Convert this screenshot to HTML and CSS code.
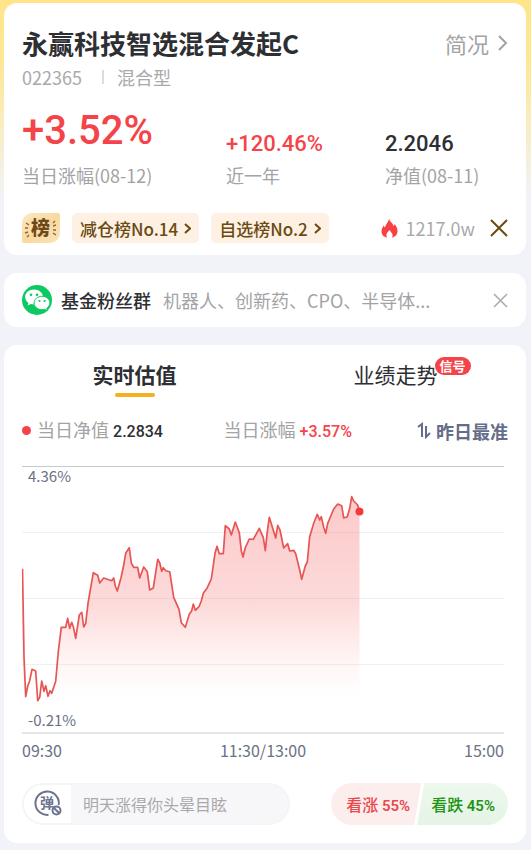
FILE: index.html
```html
<!DOCTYPE html>
<html lang="zh-CN">
  <head>
    <meta charset="UTF-8" />
    <meta name="viewport" content="width=device-width, initial-scale=1.0" />
    <title>永赢科技智选混合发起C</title>
    <link rel="stylesheet" href="styles.css">
  </head>
  <body>
    <main class="page">
      <!-- fund summary -->
      <section class="card summary">
        <div class="title-row">
          <h1>永赢科技智选混合发起C</h1>
          <a href="#" class="more">简况
            <svg width="10" height="16" viewBox="0 0 10 16"><path d="M1 1l7 7-7 7" /></svg>
          </a>
        </div>
        <div class="meta">
          <span>022365</span>
          <span class="split"></span>
          <span>混合型</span>
        </div>
        <div class="stats">
          <div class="stat">
            <p class="num big red">+3.52%</p>
            <p class="label">当日涨幅(08-12)</p>
          </div>
          <div class="stat">
            <p class="num red">+120.46%</p>
            <p class="label">近一年</p>
          </div>
          <div class="stat">
            <p class="num">2.2046</p>
            <p class="label">净值(08-11)</p>
          </div>
        </div>
        <div class="tags">
          <svg class="rank-icon" width="38" height="30" viewBox="0 0 38 30">
            <defs>
              <linearGradient id="gold" x1="0" y1="0" x2="1" y2="1">
                <stop offset="0" stop-color="#fde9c4" />
                <stop offset="0.5" stop-color="#f9d9a0" />
                <stop offset="1" stop-color="#fce3b6" />
              </linearGradient>
            </defs>
            <path d="M10 0h26a2 2 0 0 1 2 2v18a10 10 0 0 1-10 10H2a2 2 0 0 1-2-2V10A10 10 0 0 1 10 0z" fill="url(#gold)" />
            <path d="M4 10l3 2M3 15h3M3 20l3-1M5 24l2-2M31 10l2-2M31 13l3-1M31 17h3M31 20l3 2" stroke="#8a6a3a" stroke-width="1.5" fill="none" />
            <text x="9" y="22" class="rank-text">榜</text>
          </svg>
          <a href="#" class="tag">减仓榜No.14
            <svg width="7" height="11" viewBox="0 0 7 11"><path d="M1 1l5 4.500-5 4.500" /></svg>
          </a>
          <a href="#" class="tag">自选榜No.2
            <svg width="7" height="11" viewBox="0 0 7 11"><path d="M1 1l5 4.500-5 4.500" /></svg>
          </a>
          <span class="hot">
            <svg width="17" height="19" viewBox="0 0 17 19">
              <path d="M8 0c1 3 4 4 4.500 7 .6-.4 1-1 1-2 1.800 2 3 4 3 7 0 3.600-2.400 6-5.500 6.700 1-1.700.8-3.700-.5-4.900-.8-.8-1.300-1.600-1.500-2.800-1.800 1-3.600 3-3.600 5 0 1 .2 1.900.7 2.700C2.600 18 .5 15.500.5 12.300c0-2.600 1.300-4.300 2.200-5.900.4.900.6 1.500 1.300 2C4.500 5 7.500 3.500 8 0z" fill="#fa4141" />
            </svg>
            1217.0w
          </span>
          <button class="close brown" aria-label="关闭榜单">
            <svg width="18" height="18" viewBox="0 0 18 18"><path d="M1 1l16 16M17 1L1 17" /></svg>
          </button>
        </div>
      </section>

      <!-- wechat group -->
      <section class="card group">
        <svg class="wechat" width="30" height="30" viewBox="0 0 30 30">
          <circle cx="15" cy="15" r="15" fill="#0bca62" />
          <path d="M12 4.500C7 4.500 3.100 7.700 3.100 11.900c0 2.400 1.300 4.500 3.300 5.900l-.8 2.700 3.100-1.500c1.100.3 2.200.5 3.400.5 5 0 8.900-3.300 8.900-7.500s-4-7.500-9-7.500z" fill="#fff" />
          <path d="M20 11.300c-4.400 0-7.900 2.900-7.900 6.700s3.500 6.700 7.900 6.700c1 0 1.900-.1 2.700-.4l2.800 1.400-.7-2.500c1.900-1.200 3.100-3.100 3.100-5.200 0-3.800-3.500-6.700-7.900-6.700z" fill="#fff" stroke="#0bca62" />
          <g fill="#0bca62">
            <circle cx="9" cy="9.700" r="1.300" /><circle cx="15" cy="9.700" r="1.300" />
            <circle cx="17.500" cy="16" r="1.100" /><circle cx="22.600" cy="16" r="1.100" />
          </g>
        </svg>
        <strong>基金粉丝群</strong>
        <span class="topics">机器人、创新药、CPO、半导体...</span>
        <button class="close" aria-label="关闭粉丝群">
          <svg width="15" height="15" viewBox="0 0 15 15"><path d="M1 1l13 13M14 1L1 14" /></svg>
        </button>
      </section>

      <!-- live estimate -->
      <section class="card estimate">
        <div class="tabs">
          <button class="tab active">实时估值</button>
          <button class="tab">业绩走势<span class="badge">信号</span></button>
        </div>
        <div class="legend">
          <p class="value"><span class="dot"></span>当日净值 <b>2.2834</b></p>
          <p class="change">当日涨幅 <b class="red">+3.57%</b></p>
          <button class="sort">
            <svg width="14" height="17" viewBox="0 0 14 17"><path d="M1 5l4-3v13M9 4v11l4-4" /></svg>
            昨日最准
          </button>
        </div>
        <div class="chart">
          <svg viewBox="0 0 482 268">
            <defs>
              <linearGradient id="area" gradientUnits="userSpaceOnUse" x1="0" y1="30" x2="0" y2="232">
                <stop offset="0" stop-color="#f54b4b" stop-opacity="0.300" />
                <stop offset="0.550" stop-color="#f54b4b" stop-opacity="0.200" />
                <stop offset="1" stop-color="#f5a08c" stop-opacity="0" />
              </linearGradient>
            </defs>
            <path d="M0 66.500h482M0 132.500h482M0 198.500h482" stroke="#f0f0f1" />
            <path d="M0 .5h482" stroke="#c3cdd0" />
            <path d="M0 267h482" stroke="#e4e5e8" stroke-width="2" />
            <path id="fill" fill="url(#area)" />
            <path id="line" fill="none" stroke="#e85555" stroke-width="1.700" stroke-linejoin="round" />
            <circle cx="337.500" cy="45.500" r="4" fill="#f5383e" />
          </svg>
          <span class="max">4.36%</span>
          <span class="min">-0.21%</span>
        </div>
        <div class="times">
          <span>09:30</span>
          <span>11:30/13:00</span>
          <span>15:00</span>
        </div>
        <div class="bottom">
          <div class="comment">
            <button class="danmu" aria-label="弹幕开关">
              <svg width="30" height="30" viewBox="0 0 30 30">
                <path d="M15.500 25.800A11.700 11.700 0 1 1 25.700 16" fill="none" stroke="#6d7390" stroke-width="2" />
                <text x="7" y="19" class="danmu-text">弹</text>
                <circle cx="23.500" cy="21.500" r="4" fill="#fff" stroke="#6d7390" stroke-width="2" />
                <path d="M20.700 18.700l5.600 5.600" stroke="#6d7390" stroke-width="2" />
              </svg>
            </button>
            <input type="text" placeholder="明天涨得你头晕目眩" aria-label="弹幕" />
          </div>
          <div class="vote">
            <button class="up">看涨 <b>55%</b></button>
            <button class="down">看跌 <b>45%</b></button>
          </div>
        </div>
      </section>
    </main>

    <script>
      // x,y pairs of the estimate line, in chart units
      const points = [
        [0.5, 102.7], [2, 190.7], [3.7, 230.7], [5.7, 220], [7.7, 214.7], [10, 203.3], [13.7, 205], [15.7, 234.7],
        [17.7, 231.3], [19.7, 215], [22, 225.3], [23.7, 219.7], [26, 230.3], [28, 224.7], [29.7, 227.3], [33.7, 215.3],
        [36.3, 185.7], [39.3, 161.3], [43.7, 161.3], [45.7, 152.3], [47.7, 162.3], [49.7, 156.3], [51.3, 160.7],
        [53.7, 172.3], [57.3, 149], [59.7, 146.3], [61.7, 161], [63.7, 157.3], [66, 137.3], [71.3, 106.7],
        [75.7, 109.3], [77.7, 117], [81.7, 112], [89.7, 114.7], [91.7, 112], [93.3, 120], [95.3, 125], [99, 111.7],
        [101.3, 101.3], [103.7, 87.3], [107.3, 81.7], [109.3, 97], [111.7, 101.3], [115.7, 101.3], [117.7, 112],
        [121.7, 101], [125.3, 105.7], [127.7, 124], [131.3, 122], [135.7, 93.3], [137.7, 96.7], [139.7, 105.3],
        [141.3, 101.7], [143.7, 104.7], [147.7, 105.7], [151.7, 131.3], [157, 143.3], [159.3, 156.7], [163.3, 161.3],
        [167.3, 148.3], [169.7, 144.7], [171.3, 138], [173.3, 144.3], [177, 140.7], [179.3, 135], [181.3, 127.3],
        [185.3, 121.7], [189.3, 113], [193, 87.3], [195, 80.3], [197.3, 87.7], [201.3, 87.7], [203.3, 59.7],
        [207.3, 63], [209.3, 69], [213.3, 56], [217.3, 66.7], [219.3, 84.7], [221, 91], [223.3, 81.7], [227.3, 73],
        [231.3, 73.3], [237.3, 62.3], [241.3, 71.7], [243.3, 84.7], [245.3, 65.7], [247.3, 51.3], [253.7, 72],
        [255.7, 59.3], [258, 64], [261.7, 82], [265.7, 77.7], [267.7, 85], [271.7, 84.3], [273.7, 87.7],
        [277.3, 102.3], [279.7, 113.3], [283.3, 100], [285.3, 96], [287.7, 70.7], [291.7, 57.3], [295.3, 48.3],
        [297.7, 54], [299.3, 50.7], [301.7, 61.3], [303.7, 67.3], [305.7, 57.3], [311.7, 43], [315.7, 38],
        [319.7, 39.7], [321.7, 52], [325.3, 50.7], [327.7, 42.3], [329.7, 30.7], [331.7, 35], [335.7, 39], [337.5, 45.5]
      ];
      const line = "M" + points.map((p) => p.join(" ")).join("L");
      document.querySelector("#line").setAttribute("d", line);
      document.querySelector("#fill").setAttribute("d", line + "V235H0z");
    </script>
  </body>
</html>
```
FILE: styles.css
```css
* {
  margin: 0;
  padding: 0;
  box-sizing: border-box;
}

body {
  background: linear-gradient(#ffe48a, #ffe793 60px, #f1f3f9 200px) no-repeat;
  background-size: 100% 200px;
  background-color: #f1f3f9;
  color: #2e2f33;
  font-family: "Noto Sans CJK SC", sans-serif;
  font-size: 18px;
}
button,
input {
  border: 0;
  outline: 0;
  background: none;
  font: inherit;
  color: inherit;
}
button {
  cursor: pointer;
}
a {
  color: inherit;
  text-decoration: none;
}
.page {
  display: flex;
  flex-direction: column;
  gap: 18px;
  padding: 3px 5px 7px 4px;
}
.card {
  background: #fff;
  border-radius: 13px;
  padding: 0 18px;
}
.red {
  color: #f5434a;
}

/* summary */
.summary {
  padding-top: 23px;
  padding-bottom: 12px;
}
.title-row {
  display: flex;
  align-items: center;
  justify-content: space-between;
  line-height: 34px;
}
.title-row h1 {
  font-size: 26px;
  font-weight: 700;
}
.more {
  display: flex;
  align-items: center;
  gap: 9px;
  font-size: 22px;
  color: #a3a3a6;
}
.more path {
  fill: none;
  stroke: #a3a3a6;
  stroke-width: 2;
}
.meta {
  display: flex;
  align-items: center;
  gap: 13px;
  margin-top: 4px;
  line-height: 26px;
  color: #a9a9ac;
}
.split {
  width: 2px;
  height: 14px;
  margin-left: 7px;
  background: #dcdcde;
}
.stats {
  display: grid;
  grid-template-columns: 204fr 159fr 123fr;
  align-items: end;
  margin-top: 16px;
}
.num {
  font-family: Roboto, sans-serif;
  font-size: 22px;
  font-weight: 500;
  line-height: 32px;
}
.big {
  font-size: 40px;
  line-height: 50px;
  padding-bottom: 4px;
}
.label {
  line-height: 24px;
  padding-top: 3px;
  color: #a3a3a6;
  white-space: nowrap;
}
.tags {
  display: flex;
  align-items: center;
  margin-top: 26px;
}
.rank-text {
  font-size: 19px;
  font-weight: 900;
  fill: #6d4a1c;
}
.tag {
  display: flex;
  align-items: center;
  gap: 6px;
  height: 30px;
  margin-left: 12px;
  padding: 0 8px;
  border-radius: 5px;
  background: #fef1e3;
  color: #6a4a12;
  font-size: 17px;
  font-weight: 500;
  white-space: nowrap;
}
.tag path {
  fill: none;
  stroke: #6a4a12;
  stroke-width: 2;
}
.hot {
  display: flex;
  align-items: center;
  gap: 8px;
  margin-left: auto;
  color: #a9a9ac;
}
.close {
  display: flex;
  margin-left: auto;
}
.close path {
  fill: none;
  stroke: #a9a9ac;
  stroke-width: 1.5;
}
.brown {
  margin-left: 15px;
}
.brown path {
  stroke: #6a4a12;
  stroke-width: 2;
}

/* group */
.group {
  display: flex;
  align-items: center;
  height: 54px;
}
.group strong {
  margin-left: 9px;
  font-weight: 500;
}
.topics {
  margin-left: 12px;
  color: #a3a3a6;
}

/* estimate */
.estimate {
  padding-bottom: 18px;
}
.tabs {
  display: grid;
  grid-template-columns: 1fr 1fr;
  margin: 0 -18px;
  padding-top: 13px;
}
.tab {
  position: relative;
  justify-self: center;
  padding-bottom: 7px;
  font-size: 21px;
  line-height: 32px;
}
.active {
  font-weight: 700;
}
.active::after {
  content: "";
  position: absolute;
  left: calc(50% - 20px);
  bottom: 0;
  width: 40px;
  height: 4px;
  border-radius: 2px;
  background: #f5b021;
}
.badge {
  position: absolute;
  left: calc(100% - 3px);
  top: -1px;
  padding: 0 5px;
  border-radius: 9px;
  background: #f5434a;
  color: #fff;
  font-size: 13px;
  font-weight: 700;
  line-height: 18px;
  white-space: nowrap;
}
.legend {
  display: grid;
  grid-template-columns: 201fr 193fr auto;
  align-items: center;
  margin-top: 19px;
  line-height: 26px;
  color: #a3a3a6;
  white-space: nowrap;
}
.legend b {
  font-family: Roboto, sans-serif;
  font-size: 16px;
  font-weight: 500;
}
.value b {
  color: #2e2f33;
}
.dot {
  display: inline-block;
  width: 9px;
  height: 9px;
  margin-right: 6px;
  border-radius: 50%;
  background: #f5434a;
  vertical-align: 2px;
}
.sort {
  display: flex;
  align-items: center;
  gap: 5px;
  color: #666d8a;
  font-weight: 700;
  line-height: 24px;
}
.sort path {
  fill: none;
  stroke: #666d8a;
  stroke-width: 2;
}
.chart {
  position: relative;
  margin: 21px 4px 0 0;
  color: #6b7286;
  font-size: 15px;
  line-height: 20px;
}
.chart svg {
  display: block;
  width: 100%;
}
.max,
.min {
  position: absolute;
  left: 6px;
}
.max {
  top: 0;
}
.min {
  bottom: 4px;
}
.times {
  display: flex;
  justify-content: space-between;
  margin-right: 4px;
  padding-top: 4px;
  font-size: 16px;
  line-height: 24px;
  color: #6b7286;
}
.bottom {
  display: flex;
  align-items: center;
  justify-content: space-between;
  gap: 41px;
  margin-top: 21px;
}
.comment {
  display: flex;
  flex: 1;
  height: 42px;
  border: 2px solid #f5f5f7;
  border-radius: 21px;
  background: #f7f7f9;
  overflow: hidden;
}
.danmu {
  display: flex;
  align-items: center;
  justify-content: center;
  width: 47px;
  background: #fff;
}
.danmu-text {
  font-size: 14px;
  font-weight: 700;
  fill: #6d7390;
}
.comment input {
  flex: 1;
  min-width: 0;
  padding: 0 12px;
  font-size: 16px;
}
.comment input::placeholder {
  color: #a9a9ac;
}
.vote {
  display: flex;
  font-size: 16px;
  font-weight: 500;
  white-space: nowrap;
}
.vote button {
  height: 42px;
}
.vote b {
  font-family: Roboto, sans-serif;
  font-size: 15px;
  font-weight: 600;
}
.up {
  padding: 0 11px 0 15px;
  border-radius: 21px 0 0 21px;
  background: #fdeeee;
  color: #e8494d;
  clip-path: polygon(0 0, 100% 0, calc(100% - 7px) 100%, 0 100%);
}
.down {
  margin-left: -4px;
  padding: 0 13px 0 14px;
  border-radius: 0 21px 21px 0;
  background: linear-gradient(#eef8ee, #e4f4e5);
  color: #219312;
  clip-path: polygon(7px 0, 100% 0, 100% 100%, 0 100%);
}
```
